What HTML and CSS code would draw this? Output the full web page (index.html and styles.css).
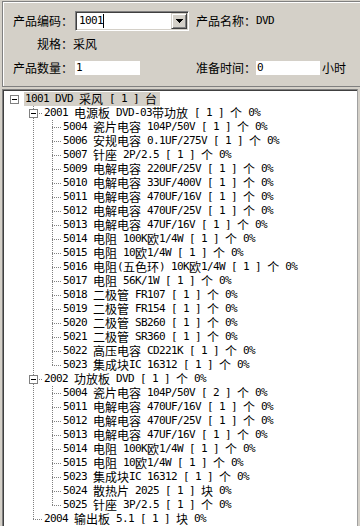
FILE: index.html
```html
<!DOCTYPE html>
<html>
<head>
<meta charset="utf-8">
<link rel="stylesheet" href="styles.css">
</head>
<body>
<div class="panel">
  <div class="frow r1">
    <span class="lbl"><span class="h">产品编码：</span></span>
    <div class="combo">
      <span class="cval">1001<span class="caret"></span></span>
      <span class="dd"><svg width="7" height="4" shape-rendering="crispEdges"><rect x="0" y="0" width="7" height="1"/><rect x="1" y="1" width="5" height="1"/><rect x="2" y="2" width="3" height="1"/><rect x="3" y="3" width="1" height="1"/></svg></span>
    </div>
    <span class="lbl2"><span class="h">产品名称：</span>DVD</span>
  </div>
  <div class="frow r2">
    <span class="lbl"><span class="h">规格：</span></span><span class="h val">采风</span>
  </div>
  <div class="frow r3">
    <span class="lbl"><span class="h">产品数量：</span></span>
    <span class="inp w1">1</span>
    <span class="lbl3"><span class="h">准备时间：</span></span>
    <span class="inp w2">0</span>
    <span class="h unit">小时</span>
  </div>
</div>
<div class="tree">
  <div class="row"><span class="g"><span class="box"></span></span><span class="lab sel">1001 DVD <span class="h">采风</span> [ 1 ] <span class="h">台</span></span></div>
  <div class="row"><span class="g"></span><span class="g t"><span class="box"></span></span><span class="lab">2001 <span class="h">电源板</span> DVD-03<span class="h">带功放</span> [ 1 ] <span class="h">个</span> 0%</span></div>
  <div class="row"><span class="g"></span><span class="g v"></span><span class="g t"></span><span class="lab">5004 <span class="h">瓷片电容</span> 104P/50V [ 1 ] <span class="h">个</span> 0%</span></div>
  <div class="row"><span class="g"></span><span class="g v"></span><span class="g t"></span><span class="lab">5006 <span class="h">安规电容</span> 0.1UF/275V [ 1 ] <span class="h">个</span> 0%</span></div>
  <div class="row"><span class="g"></span><span class="g v"></span><span class="g t"></span><span class="lab">5007 <span class="h">针座</span> 2P/2.5 [ 1 ] <span class="h">个</span> 0%</span></div>
  <div class="row"><span class="g"></span><span class="g v"></span><span class="g t"></span><span class="lab">5009 <span class="h">电解电容</span> 220UF/25V [ 1 ] <span class="h">个</span> 0%</span></div>
  <div class="row"><span class="g"></span><span class="g v"></span><span class="g t"></span><span class="lab">5010 <span class="h">电解电容</span> 33UF/400V [ 1 ] <span class="h">个</span> 0%</span></div>
  <div class="row"><span class="g"></span><span class="g v"></span><span class="g t"></span><span class="lab">5011 <span class="h">电解电容</span> 470UF/16V [ 1 ] <span class="h">个</span> 0%</span></div>
  <div class="row"><span class="g"></span><span class="g v"></span><span class="g t"></span><span class="lab">5012 <span class="h">电解电容</span> 470UF/25V [ 1 ] <span class="h">个</span> 0%</span></div>
  <div class="row"><span class="g"></span><span class="g v"></span><span class="g t"></span><span class="lab">5013 <span class="h">电解电容</span> 47UF/16V [ 1 ] <span class="h">个</span> 0%</span></div>
  <div class="row"><span class="g"></span><span class="g v"></span><span class="g t"></span><span class="lab">5014 <span class="h">电阻</span> 100K<span class="h">欧</span>1/4W [ 1 ] <span class="h">个</span> 0%</span></div>
  <div class="row"><span class="g"></span><span class="g v"></span><span class="g t"></span><span class="lab">5015 <span class="h">电阻</span> 10<span class="h">欧</span>1/4W [ 1 ] <span class="h">个</span> 0%</span></div>
  <div class="row"><span class="g"></span><span class="g v"></span><span class="g t"></span><span class="lab">5016 <span class="h">电阻</span>(<span class="h">五色环</span>) 10K<span class="h">欧</span>1/4W [ 1 ] <span class="h">个</span> 0%</span></div>
  <div class="row"><span class="g"></span><span class="g v"></span><span class="g t"></span><span class="lab">5017 <span class="h">电阻</span> 56K/1W [ 1 ] <span class="h">个</span> 0%</span></div>
  <div class="row"><span class="g"></span><span class="g v"></span><span class="g t"></span><span class="lab">5018 <span class="h">二极管</span> FR107 [ 1 ] <span class="h">个</span> 0%</span></div>
  <div class="row"><span class="g"></span><span class="g v"></span><span class="g t"></span><span class="lab">5019 <span class="h">二极管</span> FR154 [ 1 ] <span class="h">个</span> 0%</span></div>
  <div class="row"><span class="g"></span><span class="g v"></span><span class="g t"></span><span class="lab">5020 <span class="h">二极管</span> SB260 [ 1 ] <span class="h">个</span> 0%</span></div>
  <div class="row"><span class="g"></span><span class="g v"></span><span class="g t"></span><span class="lab">5021 <span class="h">二极管</span> SR360 [ 1 ] <span class="h">个</span> 0%</span></div>
  <div class="row"><span class="g"></span><span class="g v"></span><span class="g t"></span><span class="lab">5022 <span class="h">高压电容</span> CD221K [ 1 ] <span class="h">个</span> 0%</span></div>
  <div class="row"><span class="g"></span><span class="g v"></span><span class="g l"></span><span class="lab">5023 <span class="h">集成块</span>IC 16312 [ 1 ] <span class="h">个</span> 0%</span></div>
  <div class="row"><span class="g"></span><span class="g t"><span class="box"></span></span><span class="lab">2002 <span class="h">功放板</span> DVD [ 1 ] <span class="h">个</span> 0%</span></div>
  <div class="row"><span class="g"></span><span class="g v"></span><span class="g t"></span><span class="lab">5004 <span class="h">瓷片电容</span> 104P/50V [ 2 ] <span class="h">个</span> 0%</span></div>
  <div class="row"><span class="g"></span><span class="g v"></span><span class="g t"></span><span class="lab">5011 <span class="h">电解电容</span> 470UF/16V [ 1 ] <span class="h">个</span> 0%</span></div>
  <div class="row"><span class="g"></span><span class="g v"></span><span class="g t"></span><span class="lab">5012 <span class="h">电解电容</span> 470UF/25V [ 1 ] <span class="h">个</span> 0%</span></div>
  <div class="row"><span class="g"></span><span class="g v"></span><span class="g t"></span><span class="lab">5013 <span class="h">电解电容</span> 47UF/16V [ 1 ] <span class="h">个</span> 0%</span></div>
  <div class="row"><span class="g"></span><span class="g v"></span><span class="g t"></span><span class="lab">5014 <span class="h">电阻</span> 100K<span class="h">欧</span>1/4W [ 1 ] <span class="h">个</span> 0%</span></div>
  <div class="row"><span class="g"></span><span class="g v"></span><span class="g t"></span><span class="lab">5015 <span class="h">电阻</span> 10<span class="h">欧</span>1/4W [ 1 ] <span class="h">个</span> 0%</span></div>
  <div class="row"><span class="g"></span><span class="g v"></span><span class="g t"></span><span class="lab">5023 <span class="h">集成块</span>IC 16312 [ 1 ] <span class="h">个</span> 0%</span></div>
  <div class="row"><span class="g"></span><span class="g v"></span><span class="g t"></span><span class="lab">5024 <span class="h">散热片</span> 2025 [ 1 ] <span class="h">块</span> 0%</span></div>
  <div class="row"><span class="g"></span><span class="g v"></span><span class="g l"></span><span class="lab">5025 <span class="h">针座</span> 3P/2.5 [ 1 ] <span class="h">个</span> 0%</span></div>
  <div class="row"><span class="g"></span><span class="g l"></span><span class="lab">2004 <span class="h">输出板</span> 5.1 [ 1 ] <span class="h">块</span> 0%</span></div>
</div>
</body>
</html>
```
FILE: styles.css
```css
html, body {
  margin: 0;
  padding: 0;
}
body {
  width: 360px;
  height: 526px;
  overflow: hidden;
  background: #d4d0c8;
  color: #000;
  font-family: "DejaVu Sans Mono", "Liberation Mono", monospace;
  font-size: 11px;
  line-height: 14px;
  letter-spacing: -0.62px;
}
.h {
  display: inline-block;
  height: 14px;
  line-height: 14px;
  vertical-align: top;
  font-family: "Noto Sans CJK SC", sans-serif;
  font-size: 12px;
  letter-spacing: 0;
}

/* ---------- top panel ---------- */
.panel {
  box-sizing: border-box;
  margin: 1px 0 0 2px;
  height: 86px;
  padding: 9px 0 0 10px;
  border-top: 1px solid #808080;
  border-left: 1px solid #808080;
  border-bottom: 1px solid #808080;
  box-shadow: inset 1px 1px 0 #fff;
}
.frow {
  display: flex;
  align-items: center;
  white-space: nowrap;
}
.r1 { height: 20px; }
.r2 { height: 14px; margin-top: 6px; }
.r3 { height: 14px; margin-top: 10px; }
.lbl {
  flex: none;
  width: 60px;
  height: 14px;
  text-align: right;
}
.combo {
  flex: none;
  box-sizing: border-box;
  display: flex;
  width: 114px;
  height: 20px;
  margin-left: 2px;
  background: #fff;
  border-top: 1px solid #808080;
  border-left: 1px solid #808080;
  border-right: 1px solid #fff;
  border-bottom: 1px solid #fff;
  box-shadow: inset 1px 1px 0 #404040, inset -1px -1px 0 #d4d0c8;
  padding: 1px;
}
.cval {
  flex: 1;
  display: flex;
  align-items: center;
  padding-left: 2px;
}
.caret {
  display: inline-block;
  width: 1px;
  height: 14px;
  background: #000;
}
.dd {
  flex: none;
  box-sizing: border-box;
  width: 16px;
  height: 16px;
  display: flex;
  align-items: center;
  justify-content: center;
  background: #d4d0c8;
  border-top: 1px solid #d4d0c8;
  border-left: 1px solid #d4d0c8;
  border-right: 1px solid #404040;
  border-bottom: 1px solid #404040;
  box-shadow: inset 1px 1px 0 #fff, inset -1px -1px 0 #808080;
}
.dd svg { display: block; fill: #000; }
.lbl2 { margin-left: 7px; height: 14px; }
.inp {
  flex: none;
  box-sizing: border-box;
  height: 14px;
  display: flex;
  align-items: center;
  background: #fff;
  padding-left: 1px;
}
.w1 { width: 65px; margin-left: 2px; }
.lbl3 { margin-left: 56px; height: 14px; }
.w2 { width: 64px; }
.unit { margin-left: 2px; }

/* ---------- tree ---------- */
.tree {
  box-sizing: border-box;
  margin: 2px 0 0 2px;
  width: 356px;
  height: 460px;
  padding: 2px 0 0 1px;
  background: #fff;
  border-top: 1px solid #808080;
  border-left: 1px solid #808080;
  border-right: 1px solid #a0a0a0;
  box-shadow: inset 1px 1px 0 #404040;
}
.row {
  display: flex;
  height: 14px;
  white-space: nowrap;
}
.g {
  flex: none;
  box-sizing: border-box;
  width: 19px;
  height: 14px;
  padding: 3px 0 0 6px;
}
.v {
  background: repeating-linear-gradient(to bottom, #808080 0 1px, transparent 1px 2px) 10px 0 / 1px 14px no-repeat;
}
.t {
  background:
    repeating-linear-gradient(to right, #808080 0 1px, transparent 1px 2px) 10px 7px / 9px 1px no-repeat,
    repeating-linear-gradient(to bottom, #808080 0 1px, transparent 1px 2px) 10px 0 / 1px 14px no-repeat;
}
.l {
  background:
    repeating-linear-gradient(to right, #808080 0 1px, transparent 1px 2px) 10px 7px / 9px 1px no-repeat,
    repeating-linear-gradient(to bottom, #808080 0 1px, transparent 1px 2px) 10px 0 / 1px 8px no-repeat;
}
.box {
  display: block;
  box-sizing: border-box;
  width: 9px;
  height: 9px;
  border: 1px solid #808080;
  background: linear-gradient(#000, #000) 1px 3px / 5px 1px no-repeat, #fff;
}
.lab {
  height: 14px;
  line-height: 14px;
  margin-left: 1px;
  padding: 0 1px;
}
.sel {
  background: #d4d0c8;
  padding-right: 3px;
}
```
